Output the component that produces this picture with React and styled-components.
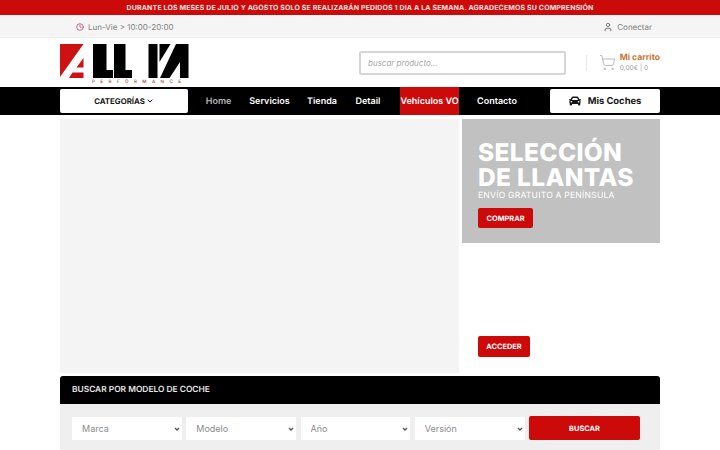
import styled, { createGlobalStyle } from "styled-components";
import { ChevronDown, Clock, ShoppingCart, User } from "lucide-react";
import { FaCar } from "react-icons/fa";

const Global = createGlobalStyle`
  html, body { margin: 0; height: 450px; overflow: hidden; background: #fff; }
  body { font-family: Inter, "Liberation Sans", sans-serif; text-rendering: geometricPrecision; }
  * { box-sizing: border-box; }
`;

const Notice = styled.div`
  height: 15px;
  background: #cc0a0a;
  color: #f6e3e3;
  font-size: 7px;
  font-weight: 700;
  line-height: 15px;
  letter-spacing: 0.14px;
  text-align: center;
  white-space: nowrap;
`;

const Container = styled.div`
  width: 600px;
  margin: 0 auto;
  display: flex;
  align-items: center;
`;

const TopBar = styled.div`
  height: 23px;
  background: #f5f5f5;
  border-bottom: 1px solid #ededed;
  font-size: 8px;
  color: #7d7d7d;
`;

const TopRow = styled(Container)`
  height: 100%;
  justify-content: space-between;
  padding: 1px 8px 0 16px;
`;

const TopItem = styled.div`
  display: flex;
  align-items: center;
  gap: 4px;
`;

const Header = styled(Container)`
  height: 49px;
`;

const LogoBox = styled.div`
  width: 130px;
  height: 49px;
  position: relative;
  flex: none;
`;

const LogoTag = styled.span`
  position: absolute;
  left: 32px;
  top: 42px;
  font-size: 4.6px;
  line-height: 5px;
  letter-spacing: 5.4px;
  font-weight: 500;
  color: #a33a3a;
  white-space: nowrap;
`;

const SearchBox = styled.input`
  width: 210px;
  height: 24px;
  margin-left: 169px;
  border: 2px solid #d6d6d6;
  border-radius: 2px;
  padding: 0 7px;
  font-family: inherit;
  font-size: 8px;
  font-style: italic;
  outline: none;
  &::placeholder { color: #a9a9a9; }
`;

const Cart = styled.div`
  display: flex;
  align-items: center;
  margin-left: 20px;
  padding-left: 12px;
  border-left: 1px solid #e9e9e9;
  height: 16px;
  gap: 4px;
`;

const CartText = styled.div`
  display: flex;
  flex-direction: column;
  white-space: nowrap;
`;

const CartTitle = styled.span`
  color: #c9762f;
  font-size: 8.6px;
  font-weight: 700;
  line-height: 11px;
`;

const CartSum = styled.span`
  color: #9a9a9a;
  font-size: 6.6px;
  line-height: 9px;
`;

const Nav = styled.div`
  height: 28px;
  background: #000;
`;

const NavRow = styled(Container)`
  height: 100%;
`;

const WhiteButton = styled.div`
  height: 24px;
  background: #fff;
  border-radius: 2px;
  display: flex;
  align-items: center;
  justify-content: center;
  gap: ${(p) => (p.$wide ? "7px" : "1px")};
  color: #161616;
  font-size: ${(p) => (p.$wide ? "9.4px" : "7.8px")};
  font-weight: 700;
  width: ${(p) => (p.$wide ? "110px" : "128px")};
  flex: none;
`;

const NavLinks = styled.nav`
  display: flex;
  align-items: stretch;
  height: 100%;
  flex: 1;
  margin-left: 18px;
`;

const NavLink = styled.a`
  display: flex;
  align-items: center;
  justify-content: center;
  color: ${(p) => (p.$muted ? "#b5b5b5" : "#fff")};
  background: ${(p) => (p.$hot ? "#cc0a0a" : "transparent")};
  font-size: 9px;
  font-weight: 600;
  white-space: nowrap;
  width: ${(p) => p.$w}px;
  margin-right: ${(p) => p.$gap}px;
`;

const Hero = styled(Container)`
  margin-top: 4px;
  height: 254px;
  align-items: stretch;
  gap: 3px;
`;

const Slide = styled.div`
  width: 399px;
  background: #f4f4f4;
`;

const Side = styled.div`
  flex: 1;
  display: flex;
  flex-direction: column;
`;

const Promo = styled.div`
  height: 124px;
  background: #c1c1c1;
  padding: 21px 16px 0;
  color: #fff;
`;

const PromoTitle = styled.div`
  font-size: 24.5px;
  line-height: 25px;
  font-weight: 800;
  letter-spacing: 0.35px;
  white-space: nowrap;
`;

const PromoSub = styled.div`
  font-size: 8.6px;
  line-height: 11px;
  margin: 1px 0 6px;
  letter-spacing: 0.2px;
  white-space: nowrap;
`;

const RedButton = styled.div`
  display: flex;
  align-items: center;
  justify-content: center;
  width: ${(p) => p.$w}px;
  height: ${(p) => p.$h}px;
  background: #cc0a0a;
  color: #fff;
  border-radius: 2px;
  font-size: 7.4px;
  font-weight: 700;
  flex: none;
`;

const Access = styled.div`
  flex: 1;
  display: flex;
  align-items: flex-end;
  padding: 0 0 16px 16px;
`;

const Finder = styled.section`
  width: 600px;
  margin: 3px auto 0;
`;

const FinderHead = styled.div`
  height: 28px;
  background: #000;
  border-radius: 3px 3px 0 0;
  color: #e6e6e6;
  font-size: 8.4px;
  font-weight: 600;
  line-height: 28px;
  padding-left: 12px;
`;

const FinderBody = styled.div`
  height: 46px;
  background: #efefef;
  padding: 12px 20px 0 12px;
  display: flex;
  align-items: flex-start;
  gap: 4.5px;
`;

const arrow = `url("data:image/svg+xml,%3Csvg xmlns='http://www.w3.org/2000/svg' width='8' height='8' viewBox='0 0 8 8'%3E%3Cpath d='M2 3l2 2 2-2' fill='none' stroke='%23555' stroke-width='1.3'/%3E%3C/svg%3E")`;

const Picker = styled.select`
  appearance: none;
  flex: 1;
  min-width: 0;
  height: 23px;
  margin-top: 1px;
  border: none;
  border-radius: 0;
  background: #fff ${arrow} no-repeat right 1px center;
  color: #8b8b8b;
  font-family: inherit;
  font-size: 9px;
  padding-left: 10px;
`;

const Logo = () => (
  <LogoBox>
    <svg width="130" height="42" viewBox="60 38 130 42" style={{ display: "block" }}>
      <polygon points="60,44 83.5,44 60,77" fill="#cc1212" />
      <polygon points="83.5,58 83.5,67.5 76.5,67.5" fill="#cc1212" />
      <polygon points="72.5,72.5 83.5,72.5 83.5,78 69,78" fill="#cc1212" />
      <polygon points="93,44 106.5,44 106.5,70 113,70 113,78 93,78" fill="#000" />
      <polygon points="114,44 125.5,44 125.5,70 132,70 132,78 114,78" fill="#000" />
      <rect x="148.5" y="44" width="9" height="34" fill="#000" />
      <polygon points="159.5,44 170.5,44 159.5,62" fill="#000" />
      <polygon points="176,44 188.5,44 188.5,78 180,78 180,62 169.5,78 160,78" fill="#000" />
    </svg>
    <LogoTag>PERFORMANCE</LogoTag>
  </LogoBox>
);

export default function App() {
  return (
    <>
      <Global />
      <Notice>DURANTE LOS MESES DE JULIO Y AGOSTO SOLO SE REALIZARÁN PEDIDOS 1 DIA A LA SEMANA. AGRADECEMOS SU COMPRENSIÓN</Notice>
      <TopBar>
        <TopRow>
          <TopItem>
            <Clock size={8} color="#b0305a" strokeWidth={2} />
            Lun-Vie &gt; 10:00-20:00
          </TopItem>
          <TopItem>
            <User size={10} color="#666" />
            Conectar
          </TopItem>
        </TopRow>
      </TopBar>
      <Header>
        <Logo />
        <SearchBox placeholder="buscar producto..." />
        <Cart>
          <ShoppingCart size={17} color="#b4b4b4" strokeWidth={1.3} />
          <CartText>
            <CartTitle>Mi carrito</CartTitle>
            <CartSum>0,00€ | 0</CartSum>
          </CartText>
        </Cart>
      </Header>
      <Nav>
        <NavRow>
          <WhiteButton>
            CATEGORÍAS
            <ChevronDown size={8} strokeWidth={3} />
          </WhiteButton>
          <NavLinks>
            <NavLink $muted $w={25} $gap={20}>Home</NavLink>
            <NavLink $w={37} $gap={20}>Servicios</NavLink>
            <NavLink $w={28} $gap={20}>Tienda</NavLink>
            <NavLink $w={24} $gap={20}>Detail</NavLink>
            <NavLink $hot $w={59} $gap={19}>Vehículos VO</NavLink>
            <NavLink $w={38} $gap={0}>Contacto</NavLink>
          </NavLinks>
          <WhiteButton $wide>
            <FaCar size={12} />
            Mis Coches
          </WhiteButton>
        </NavRow>
      </Nav>
      <Hero>
        <Slide />
        <Side>
          <Promo>
            <PromoTitle>SELECCIÓN</PromoTitle>
            <PromoTitle>DE LLANTAS</PromoTitle>
            <PromoSub>ENVÍO GRATUITO A PENÍNSULA</PromoSub>
            <RedButton $w={55} $h={20}>COMPRAR</RedButton>
          </Promo>
          <Access>
            <RedButton $w={52} $h={21}>ACCEDER</RedButton>
          </Access>
        </Side>
      </Hero>
      <Finder>
        <FinderHead>BUSCAR POR MODELO DE COCHE</FinderHead>
        <FinderBody>
          <Picker><option>Marca</option></Picker>
          <Picker><option>Modelo</option></Picker>
          <Picker><option>Año</option></Picker>
          <Picker><option>Versión</option></Picker>
          <RedButton $w={111} $h={24}>BUSCAR</RedButton>
        </FinderBody>
      </Finder>
    </>
  );
}
